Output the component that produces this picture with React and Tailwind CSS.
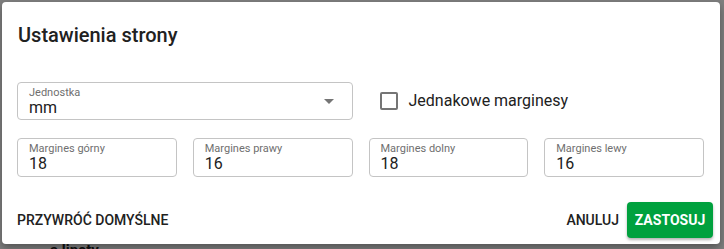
import React from "react";

function Field({ label, value, children, className = "" }) {
  return (
    <div className={`relative flex flex-col border border-[#c4c4c4] rounded-[4px] px-[11px] pt-[3px] ${className}`}>
      <span className="text-[11px] leading-[13px] text-[#6f6f6f]">{label}</span>
      <span className="text-[16px] leading-[18px] text-[#212121]">{value}</span>
      {children}
    </div>
  );
}

export default function App() {
  return (
    <div className="w-[724px] h-[249px] bg-[#7f7f7f] pt-[2px] pl-[2px] overflow-hidden relative" style={{ fontFamily: "Roboto, 'Liberation Sans', sans-serif" }}>
      <div className="absolute left-[50px] top-[243px] text-[15px] leading-[15px] font-bold text-[#111]">a linety</div>
      <div className="relative w-[718px] h-[242px] bg-white rounded-[4px] shadow-[0_4px_8px_rgba(0,0,0,0.35)] flex flex-col">
        <h2 className="px-[16px] pt-[17px] text-[20px] leading-[32px] font-medium text-[#212121]">Ustawienia strony</h2>
        <div className="px-[15px] pr-[16px] mt-[31px] grid grid-cols-4 gap-x-[16px] gap-y-[18px]">
          <Field label="Jednostka" value="mm" className="col-span-2 h-[38px]">
            <svg className="absolute right-[18px] top-[16px]" width="10" height="5" viewBox="0 0 10 5">
              <path d="M0 0 L10 0 L5 5 Z" fill="#757575" />
            </svg>
          </Field>
          <div className="col-span-2 flex items-center pl-[11px]">
            <div className="w-[18px] h-[18px] border-2 border-[#757575] rounded-[2px]" />
            <span className="ml-[11px] text-[16px] text-[#212121]">Jednakowe marginesy</span>
          </div>
          <Field label="Margines górny" value="18" className="h-[39px]" />
          <Field label="Margines prawy" value="16" className="h-[39px]" />
          <Field label="Margines dolny" value="18" className="h-[39px]" />
          <Field label="Margines lewy" value="16" className="h-[39px]" />
        </div>
        <div className="mt-[25px] flex items-center pl-[15px] pr-[7px]">
          <span className="text-[14px] font-medium text-[#212121]">PRZYWRÓĆ DOMYŚLNE</span>
          <span className="ml-auto text-[14px] font-medium text-[#212121]">ANULUJ</span>
          <button className="ml-[8px] w-[86px] h-[36px] bg-[#00a13e] rounded-[4px] text-white text-[14px] font-bold shadow-[0_2px_3px_rgba(0,0,0,0.3)]">ZASTOSUJ</button>
        </div>
      </div>
    </div>
  );
}
